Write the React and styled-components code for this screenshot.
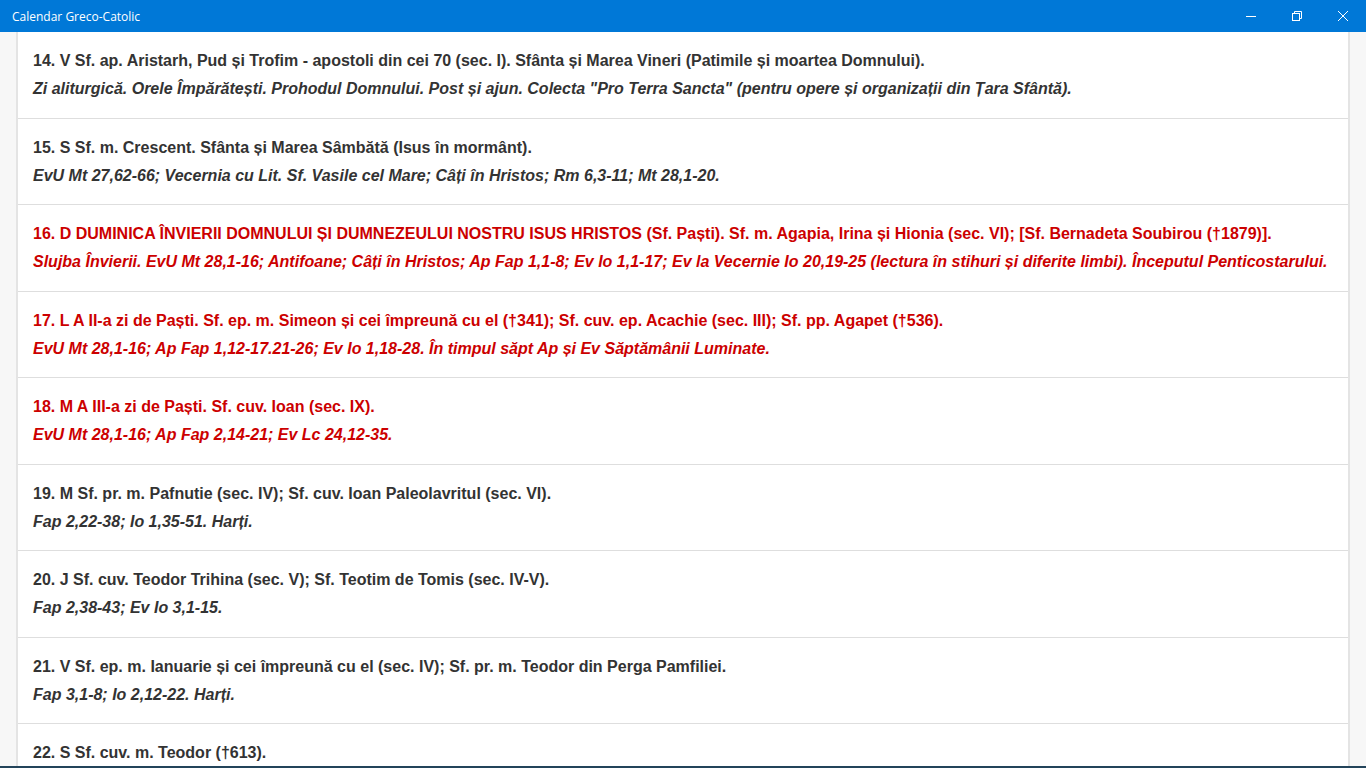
import styled, { createGlobalStyle } from "styled-components";

const GlobalStyle = createGlobalStyle`
  html, body {
    margin: 0;
    padding: 0;
    height: 100%;
    overflow: hidden;
  }
`;

const Window = styled.div`
  width: 1366px;
  height: 768px;
  display: flex;
  flex-direction: column;
  background-color: #f7f7f7;
  font-family: "Liberation Sans", Arial, sans-serif;
`;

const TitleBar = styled.div`
  height: 32px;
  flex: none;
  background-color: #0078d7;
  color: #fff;
  display: flex;
  align-items: center;
  justify-content: space-between;
`;

const Title = styled.span`
  font-family: "Open Sans", "Noto Sans", sans-serif;
  font-size: 12px;
  padding-left: 12px;
`;

const Controls = styled.div`
  display: flex;
  height: 100%;
`;

const ControlButton = styled.div`
  width: 46px;
  height: 100%;
  display: flex;
  align-items: center;
  justify-content: center;
`;

const Body = styled.div`
  flex: 1;
  overflow: hidden;
  padding: 0 16px;
`;

const List = styled.div`
  background-color: #fff;
  border-left: 2px solid #e4e4e4;
  border-right: 2px solid #e4e4e4;
  height: 100%;
  overflow: hidden;
`;

const Row = styled.div`
  padding: 15px 16px 14.5px 15px;
  border-bottom: 1px solid #dedede;
  color: ${(p) => (p.$red ? "#cc0000" : "#333333")};
  white-space: nowrap;
`;

const Line = styled.div`
  font-size: 16px;
  font-weight: bold;
  line-height: 28px;
  font-style: ${(p) => (p.$italic ? "italic" : "normal")};
`;

const BottomEdge = styled.div`
  height: 2px;
  flex: none;
  background-color: #23445a;
`;

const days = [
  {
    title:
      "14. V Sf. ap. Aristarh, Pud și Trofim - apostoli din cei 70 (sec. I). Sfânta și Marea Vineri (Patimile și moartea Domnului).",
    note:
      'Zi aliturgică. Orele Împărătești. Prohodul Domnului. Post și ajun. Colecta "Pro Terra Sancta" (pentru opere și organizații din Țara Sfântă).',
  },
  {
    title: "15. S Sf. m. Crescent. Sfânta și Marea Sâmbătă (Isus în mormânt).",
    note: "EvU Mt 27,62-66; Vecernia cu Lit. Sf. Vasile cel Mare; Câți în Hristos; Rm 6,3-11; Mt 28,1-20.",
  },
  {
    red: true,
    title:
      "16. D DUMINICA ÎNVIERII DOMNULUI ȘI DUMNEZEULUI NOSTRU ISUS HRISTOS (Sf. Paști). Sf. m. Agapia, Irina și Hionia (sec. VI); [Sf. Bernadeta Soubirou (†1879)].",
    note:
      "Slujba Învierii. EvU Mt 28,1-16; Antifoane; Câți în Hristos; Ap Fap 1,1-8; Ev Io 1,1-17; Ev la Vecernie Io 20,19-25 (lectura în stihuri și diferite limbi). Începutul Penticostarului.",
  },
  {
    red: true,
    title:
      "17. L A II-a zi de Paști. Sf. ep. m. Simeon și cei împreună cu el (†341); Sf. cuv. ep. Acachie (sec. III); Sf. pp. Agapet (†536).",
    note: "EvU Mt 28,1-16; Ap Fap 1,12-17.21-26; Ev Io 1,18-28. În timpul săpt Ap și Ev Săptămânii Luminate.",
  },
  {
    red: true,
    title: "18. M A III-a zi de Paști. Sf. cuv. Ioan (sec. IX).",
    note: "EvU Mt 28,1-16; Ap Fap 2,14-21; Ev Lc 24,12-35.",
  },
  {
    title: "19. M Sf. pr. m. Pafnutie (sec. IV); Sf. cuv. Ioan Paleolavritul (sec. VI).",
    note: "Fap 2,22-38; Io 1,35-51. Harți.",
  },
  {
    title: "20. J Sf. cuv. Teodor Trihina (sec. V); Sf. Teotim de Tomis (sec. IV-V).",
    note: "Fap 2,38-43; Ev Io 3,1-15.",
  },
  {
    title:
      "21. V Sf. ep. m. Ianuarie și cei împreună cu el (sec. IV); Sf. pr. m. Teodor din Perga Pamfiliei.",
    note: "Fap 3,1-8; Io 2,12-22. Harți.",
  },
  {
    title: "22. S Sf. cuv. m. Teodor (†613).",
    note: "Fap 3,11-16; Io 3,22-33. Harți.",
  },
];

const App = () => {
  return (
    <>
      <GlobalStyle />
      <Window>
        <TitleBar>
          <Title>Calendar Greco-Catolic</Title>
          <Controls>
            <ControlButton>
              <svg width="10" height="10" viewBox="0 0 10 10">
                <path d="M0 5.5h10" stroke="#fff" strokeWidth="1" />
              </svg>
            </ControlButton>
            <ControlButton>
              <svg width="10" height="10" viewBox="0 0 10 10" fill="none" stroke="#fff" strokeWidth="1">
                <rect x="0.5" y="2.5" width="7" height="7" />
                <path d="M2.5 2.5V0.5h7v7h-2" />
              </svg>
            </ControlButton>
            <ControlButton>
              <svg width="10" height="10" viewBox="0 0 10 10" stroke="#fff" strokeWidth="1">
                <path d="M0 0l10 10M10 0L0 10" />
              </svg>
            </ControlButton>
          </Controls>
        </TitleBar>
        <Body>
          <List>
            {days.map((d) => (
              <Row key={d.title} $red={d.red}>
                <Line>{d.title}</Line>
                <Line $italic>{d.note}</Line>
              </Row>
            ))}
          </List>
        </Body>
        <BottomEdge />
      </Window>
    </>
  );
};

export default App;
